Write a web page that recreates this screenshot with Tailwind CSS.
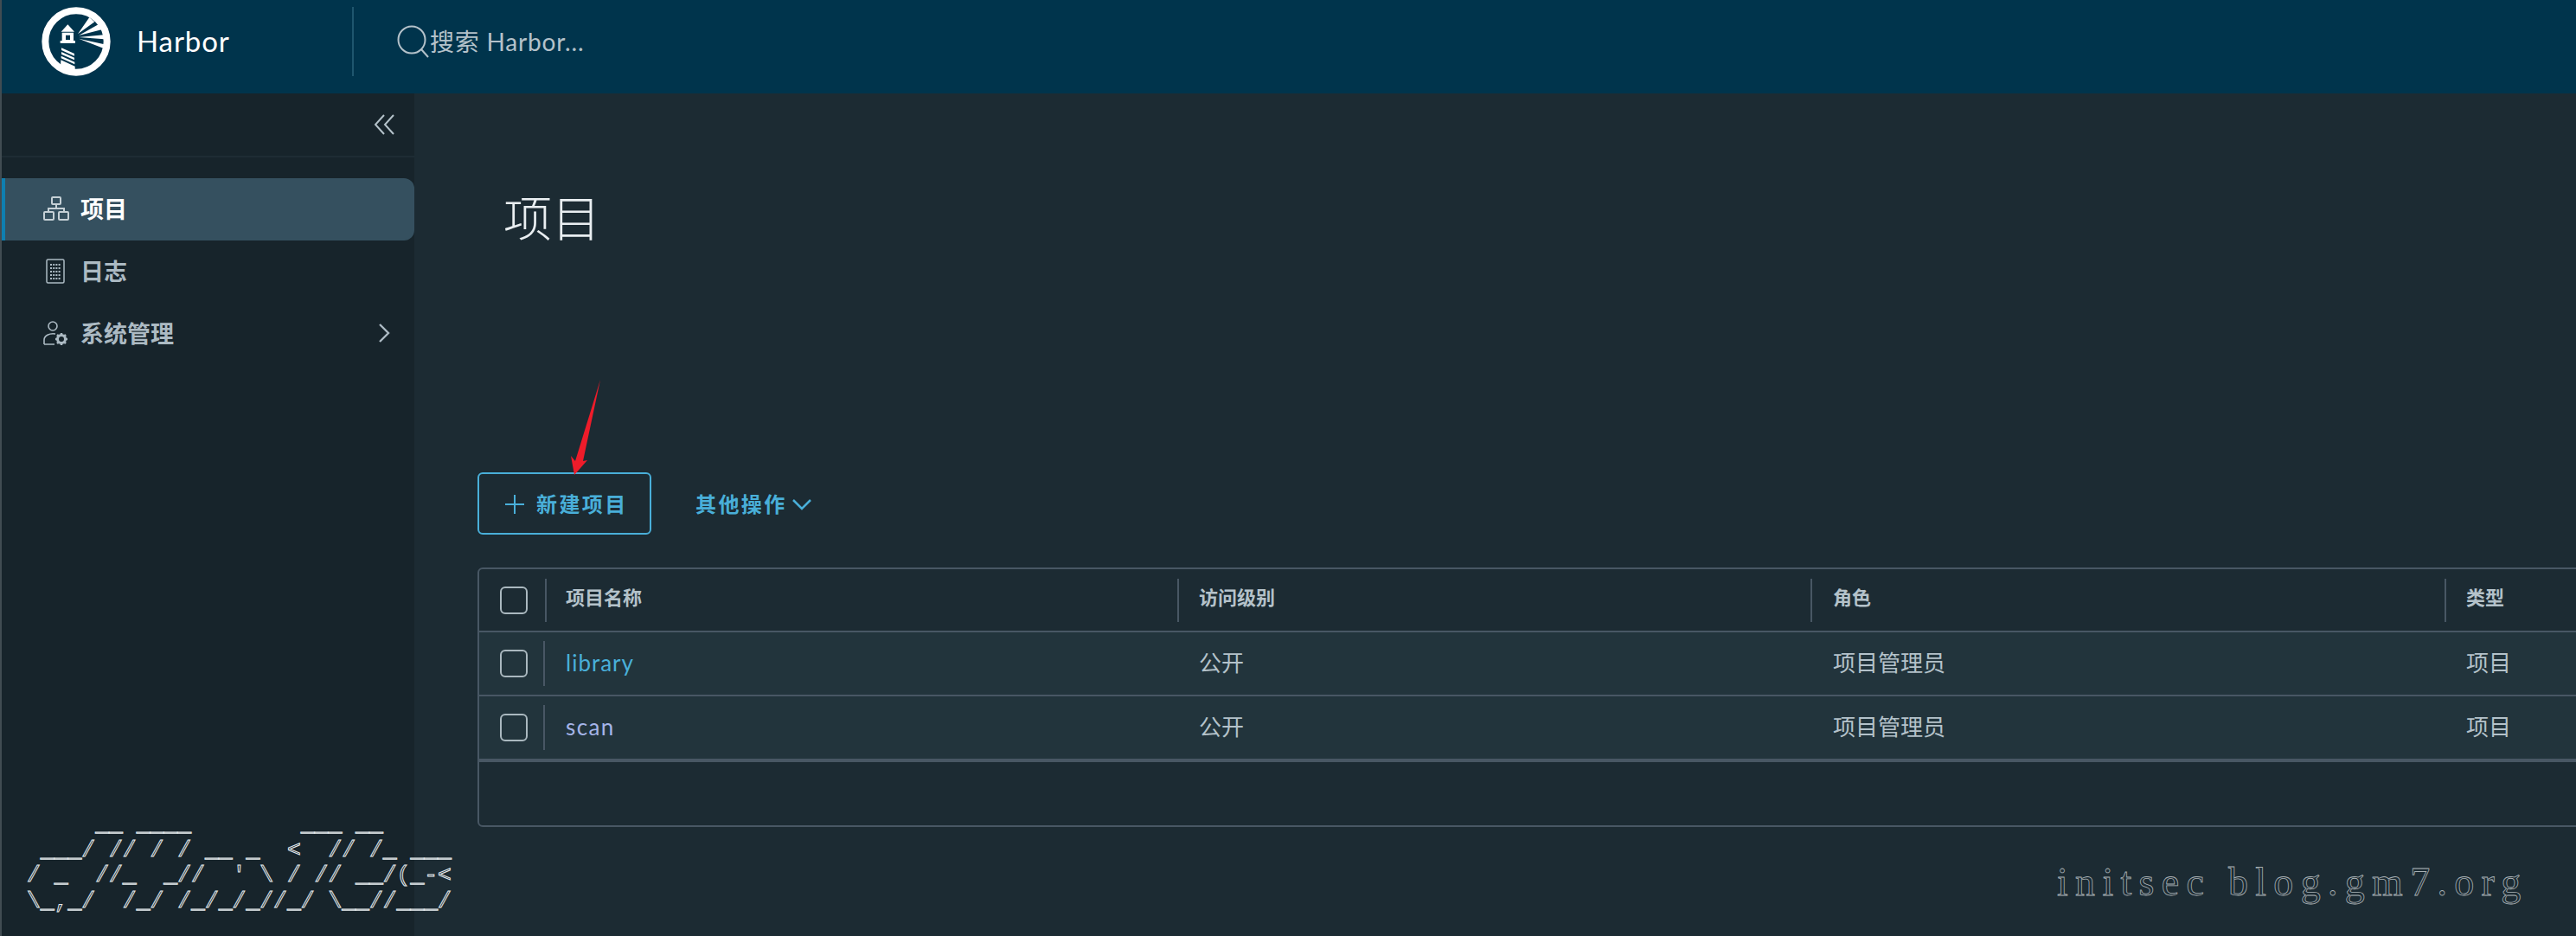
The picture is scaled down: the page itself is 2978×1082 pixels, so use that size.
<!DOCTYPE html>
<html lang="zh-CN">
<head>
    <meta charset="UTF-8">
    <title>Harbor</title>
    <script src="https://cdn.jsdelivr.net/npm/@tailwindcss/browser@4"></script>
</head>
<body class="bg-[#1c2b33] font-['Lato','Noto_Sans_CJK_SC',sans-serif]">
    <div class="relative w-[2978px] h-[1082px] overflow-hidden border-l-2 border-[#414c52]">
        <!-- top bar -->
        <header class="flex items-center h-[108px] pb-[12px] bg-[#00344c]">
            <svg class="ml-[46px] w-[80px] h-[80px] shrink-0" viewBox="85 24 238 240" fill="#fff">
                <circle cx="204" cy="144" r="107" fill="none" stroke="#fff" stroke-width="24"/>
                <path d="M175 85 L198 110 L152 110 Z"/>
                <path fill-rule="evenodd" d="M155 113 H195 V141 H201 V150 H149 V141 H155 Z M168 122 V138 H183 V122 Z"/>
                <path d="M153 166 L198 186 V194 L153 174 Z M153 180 L198 200 V208 L153 188 Z M152 194 L199 215 V223 L152 202 Z M151 208 L200 230 V246 L150 232 Z"/>
                <path d="M210 118 L250 60 L268 76 Z M213 123 L281 85 L292 103 Z M213 129 L300 121 L301 136 Z M213 134 L302 154 L300 168 Z"/>
            </svg>
            <span class="ml-[30px] w-[249px] text-[33px] tracking-[0.9px] text-white">Harbor</span>
            <div class="w-[2px] h-[80px] bg-[#1f566e]"></div>
            <div class="flex items-center ml-[50px] text-[#b4c2ca]">
                <svg class="w-[38px] h-[38px]" viewBox="0 0 38 38" fill="none" stroke="#b4c2ca" stroke-width="2">
                    <circle cx="17" cy="17" r="15.5"/>
                    <path d="M28 28 L36 37"/>
                </svg>
                <span class="text-[28px] tracking-[0.8px]">搜索 Harbor...</span>
            </div>
        </header>
        <div class="flex h-[974px]">
            <!-- side nav -->
            <aside class="w-[477px] shrink-0 bg-[#17242b]">
                <div class="flex justify-end items-center h-[74px] pr-[23px] border-b-2 border-[#1e2c34]">
                    <svg class="w-[24px] h-[24px]" viewBox="0 0 24 24" fill="none" stroke="#b4c2ca" stroke-width="2">
                        <path d="M12 1 L2 12 L12 23 M23 1 L13 12 L23 23"/>
                    </svg>
                </div>
                <nav class="pt-[24px]">
                    <a class="flex items-center h-[72px] pl-[46px] gap-[13px] pb-[2px] bg-[#35505f] border-l-[4px] border-[#0f7fb0] rounded-r-xl text-[27px] leading-none font-bold text-white">
                        <svg class="w-[30px] h-[28px] -ml-[2px]" viewBox="0 0 30 28" fill="none" stroke="#c5d0d6" stroke-width="2">
                            <rect x="10" y="1" width="10" height="8" rx="1"/>
                            <rect x="1" y="18" width="11" height="9" rx="1"/>
                            <rect x="18" y="18" width="11" height="9" rx="1"/>
                            <path d="M15 9 V14 M6 18 V14 H24 V18"/>
                        </svg>
                        项目
                    </a>
                    <a class="flex items-center h-[72px] pl-[51px] pb-[2px] gap-[18px] text-[27px] leading-none font-bold text-[#acbac3]">
                        <svg class="w-[22px] h-[29px]" viewBox="0 0 22 29" fill="none" stroke="#acbac3" stroke-width="1.5">
                            <rect x="1" y="1" width="20" height="27" rx="1.5"/>
                            <path stroke-width="2" stroke-dasharray="2 1.2" d="M5 7 H17 M5 11 H17 M5 15 H17 M5 19 H17 M5 23 H17"/>
                        </svg>
                        日志
                    </a>
                    <a class="flex items-center h-[72px] pl-[48px] pb-[2px] gap-[14px] text-[27px] leading-none font-bold text-[#acbac3]">
                        <svg class="w-[29px] h-[28px]" viewBox="0 0 29 28" fill="none" stroke="#acbac3" stroke-width="1.6">
                            <circle cx="11" cy="6" r="5"/>
                            <path d="M1 27 V22 C1 17 7 14 14 15 M1 27 H13"/>
                            <circle cx="21" cy="21" r="4.5" stroke-width="3"/>
                            <path stroke-width="2.5" d="M21 14 V16 M21 26 V28 M14 21 H16 M26 21 H28 M16 16 L17.5 17.5 M24.5 24.5 L26 26 M26 16 L24.5 17.5 M17.5 24.5 L16 26"/>
                        </svg>
                        <span class="flex-1">系统管理</span>
                        <svg class="w-[14px] h-[22px] mr-[28px]" viewBox="0 0 14 22" fill="none" stroke="#acbac3" stroke-width="2.4">
                            <path d="M2 1 L12 11 L2 21"/>
                        </svg>
                    </a>
                </nav>
            </aside>
            <!-- content -->
            <main class="pl-[73px]">
                <h1 class="ml-[30px] mt-[117px] h-[54px] text-[56px] leading-[54px] font-light text-[#e9eef1]">项目</h1>
                <div class="flex items-center mt-[267px] h-[72px]">
                    <button class="flex items-center w-[201px] h-[72px] pl-[29px] pt-[2px] gap-[13px] border-2 border-[#49afd9] rounded-md text-[24px] font-semibold tracking-[2.4px] text-[#49afd9]">
                        <svg class="w-[24px] h-[24px]" viewBox="0 0 24 24" fill="none" stroke="#49afd9" stroke-width="2">
                            <path d="M12 1 V23 M1 12 H23"/>
                        </svg>
                        新建项目
                    </button>
                    <button class="flex items-center ml-[51px] pt-[2px] gap-[6px] text-[24px] font-semibold tracking-[2.4px] text-[#49afd9]">
                        其他操作
                        <svg class="w-[22px] h-[14px]" viewBox="0 0 22 14" fill="none" stroke="#49afd9" stroke-width="2.5">
                            <path d="M1 2 L11 12 L21 2"/>
                        </svg>
                    </button>
                </div>
                <!-- datagrid -->
                <div class="mt-[38px] w-[2600px] h-[300px] border-2 border-[#485764] rounded-md text-[26px] text-[#b4c2ca]">
                    <div class="flex items-center h-[73px] border-b-2 border-[#485764] text-[22px] font-semibold">
                        <div class="flex items-center w-[78px] h-[50px] pl-[24px] border-r-2 border-[#485764]">
                            <span class="w-[32px] h-[32px] border-2 border-[#aab8bf] rounded-md"></span>
                        </div>
                        <div class="w-[731px] h-[50px] leading-[44px] pl-[22px] border-r-2 border-[#485764]">项目名称</div>
                        <div class="w-[732px] h-[50px] leading-[44px] pl-[23px] border-r-2 border-[#485764]">访问级别</div>
                        <div class="w-[733px] h-[50px] leading-[44px] pl-[24px] border-r-2 border-[#485764]">角色</div>
                        <div class="h-[50px] leading-[44px] pl-[23px]">类型</div>
                    </div>
                    <div class="flex items-center h-[74px] bg-[#22343c] border-b-2 border-[#485764]">
                        <div class="flex items-center w-[76px] h-[52px] pl-[24px] border-r-2 border-[#485764]">
                            <span class="w-[32px] h-[32px] border-2 border-[#aab8bf] rounded-md"></span>
                        </div>
                        <a class="w-[733px] pl-[24px] pb-[1px] tracking-[1px] text-[#49afd9]">library</a>
                        <div class="w-[732px] pl-[23px] pb-[1px]">公开</div>
                        <div class="w-[733px] pl-[24px] pb-[1px]">项目管理员</div>
                        <div class="pl-[23px] pb-[1px]">项目</div>
                    </div>
                    <div class="flex items-center h-[76px] bg-[#22343c] border-b-4 border-[#485764]">
                        <div class="flex items-center w-[76px] h-[52px] pl-[24px] border-r-2 border-[#485764]">
                            <span class="w-[32px] h-[32px] border-2 border-[#aab8bf] rounded-md"></span>
                        </div>
                        <a class="w-[733px] pl-[24px] pb-[2px] tracking-[1.4px] text-[#a5b4e8]">scan</a>
                        <div class="w-[732px] pl-[23px] pb-[2px]">公开</div>
                        <div class="w-[733px] pl-[24px] pb-[2px]">项目管理员</div>
                        <div class="pl-[23px] pb-[2px]">项目</div>
                    </div>
                </div>
            </main>
        </div>
        <!-- annotations pasted over the screenshot -->
        <svg class="absolute left-[-2px] top-0 w-[2978px] h-[1082px] pointer-events-none" viewBox="0 0 2978 1082">
            <path fill="#ee1c2a" d="M694 439 L674 533 L679 532 L664 549 L660 527 L665 533 Z"/>
        </svg>
        <pre class="absolute left-[29px] top-[939px] font-['Liberation_Mono',monospace] text-[26.4px] leading-[29.5px] text-transparent [-webkit-text-stroke:1px_#e3e9ec]">     __ ____        ___ __
 ___/ // / / __ _  &lt;  // /_ ___
/ _  //_  _//  ' \ / // __/(_-&lt;
\_,_/  /_/ /_/_/_//_/ \__//___/</pre>
        <div class="absolute left-[2376px] top-[995px] font-['Liberation_Serif',serif] text-[46px] leading-[50px] tracking-[8.3px] whitespace-pre text-transparent [-webkit-text-stroke:0.8px_#a9b1b5]">initsec blog.gm7.org</div>
    </div>
</body>
</html>
